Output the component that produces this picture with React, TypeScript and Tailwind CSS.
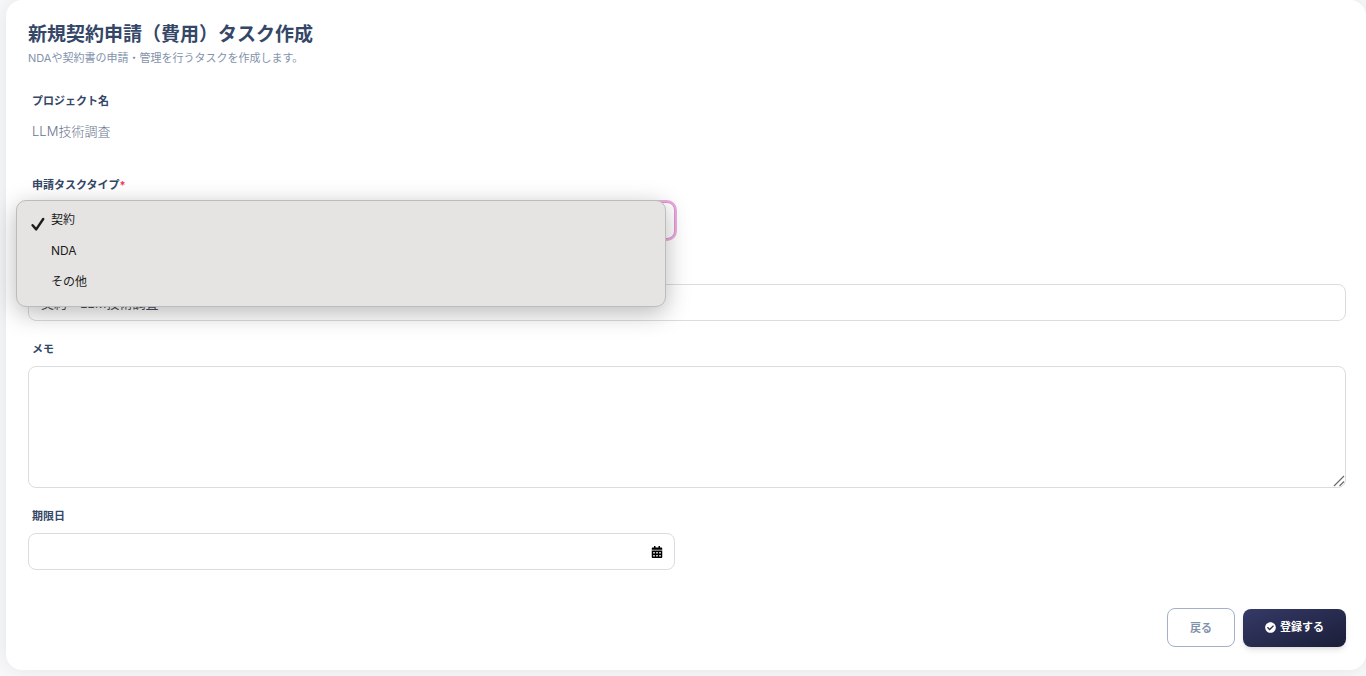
import { useState } from 'react';
import { FaCalendarAlt, FaCheckCircle } from 'react-icons/fa';

const taskTypes = ['契約', 'NDA', 'その他'];

const inputClass =
  'block w-full rounded-lg border border-[#d9dce1] bg-white px-3 text-[13px] text-[#495057] outline-none';

const Label = ({
  htmlFor,
  required,
  children,
}: {
  htmlFor: string;
  required?: boolean;
  children: React.ReactNode;
}) => (
  <label
    htmlFor={htmlFor}
    className="ml-1 mb-[7px] block text-[11px] leading-5 font-bold text-[#344767]"
  >
    {children}
    {required && <span className="text-[#f5365c]">*</span>}
  </label>
);

const CheckMark = () => (
  <svg
    viewBox="0 0 14 14"
    className="w-[14px] h-[14px] translate-y-1"
    fill="none"
    stroke="#1c1c1c"
    strokeWidth="2.4"
    strokeLinecap="round"
    strokeLinejoin="round"
  >
    <path d="M1.6 8.2 5.2 12.4 12.2 2" />
  </svg>
);

const ResizeHandle = () => (
  <svg
    viewBox="0 0 12 12"
    className="pointer-events-none absolute right-px bottom-px h-3 w-3"
    fill="none"
    stroke="#6b6b6b"
    strokeWidth="1.2"
  >
    <path d="M1 11 11 1M6.5 11 11 6.5" />
  </svg>
);

const App = () => {
  const [type, setType] = useState('契約');
  const [open, setOpen] = useState(true);
  const [title, setTitle] = useState('契約・LLM技術調査');
  const [memo, setMemo] = useState('');
  const [dueDate, setDueDate] = useState('');

  const selectType = (value: string) => {
    setType(value);
    setTitle(`${value}・LLM技術調査`);
    setOpen(false);
  };

  return (
    <div className="min-h-screen overflow-x-hidden bg-[#f8f9fa] pl-[6px] font-['Inter','Noto_Sans_CJK_JP',sans-serif]">
      <form
        onSubmit={(e) => e.preventDefault()}
        className="rounded-2xl bg-white pt-[23px] pr-5 pb-[23px] pl-[22px] shadow-[0_0_24px_rgba(0,0,0,0.09)]"
      >
        <h1 className="text-[19px] leading-6 font-bold text-[#344767]">
          新規契約申請（費用）タスク作成
        </h1>
        <p className="text-[11px] leading-[22px] text-[#8392ab]">
          NDAや契約書の申請・管理を行うタスクを作成します。
        </p>

        <div className="mt-[22px]">
          <Label htmlFor="project">プロジェクト名</Label>
          <output
            id="project"
            className="ml-1 block text-[13px] leading-[26px] font-light text-[#67748e]"
          >
            LLM技術調査
          </output>
        </div>

        <div className="mt-[31px] grid grid-cols-2 gap-6">
          <div className="relative">
            <Label htmlFor="task-type" required>
              申請タスクタイプ
            </Label>
            <select
              id="task-type"
              value={type}
              onChange={(e) => selectType(e.target.value)}
              className="block h-[37px] w-full appearance-none rounded-lg border border-[#e293d3] bg-white px-3 text-[13px] text-[#495057] outline-none ring-2 ring-[#e9aede]"
            >
              {taskTypes.map((item) => (
                <option key={item} value={item}>
                  {item}
                </option>
              ))}
            </select>

            {open && (
              <div
                role="listbox"
                className="absolute top-[25px] right-[9px] -left-3 z-10 rounded-[10px] border border-[#bcbcbb] bg-[#e5e4e2] pt-[3px] pb-[9px] shadow-[0_6px_24px_rgba(0,0,0,0.28)]"
              >
                {taskTypes.map((item) => (
                  <button
                    key={item}
                    type="button"
                    role="option"
                    aria-selected={item === type}
                    onClick={() => selectType(item)}
                    className="flex h-[31px] w-full items-center gap-1 pl-[14px] text-xs text-[#1c1c1c]"
                  >
                    <span className="w-4">{item === type && <CheckMark />}</span>
                    {item}
                  </button>
                ))}
              </div>
            )}
          </div>
        </div>

        <div className="mt-[18px]">
          <Label htmlFor="title" required>
            タスク名
          </Label>
          <input
            id="title"
            type="text"
            value={title}
            onChange={(e) => setTitle(e.target.value)}
            className={`${inputClass} h-[37px]`}
          />
        </div>

        <div className="mt-[18px]">
          <Label htmlFor="memo">メモ</Label>
          <div className="relative">
            <textarea
              id="memo"
              value={memo}
              onChange={(e) => setMemo(e.target.value)}
              className={`${inputClass} h-[122px] resize-y py-2 [&::-webkit-resizer]:hidden`}
            />
            <ResizeHandle />
          </div>
        </div>

        <div className="mt-[18px] grid grid-cols-2 gap-6">
          <div>
            <Label htmlFor="due-date">期限日</Label>
            <div className="relative">
              <input
                id="due-date"
                type="text"
                value={dueDate}
                onChange={(e) => setDueDate(e.target.value)}
                className={`${inputClass} h-[37px] pr-10`}
              />
              <FaCalendarAlt className="absolute inset-y-0 right-3 my-auto h-3 w-3 text-black" />
            </div>
          </div>
        </div>

        <div className="mt-[38px] flex items-center justify-end gap-2">
          <button
            type="button"
            className="h-[39px] rounded-lg border border-[#a3b0c9] px-[22px] pt-0.5 text-[11px] font-bold text-[#8392ab]"
          >
            戻る
          </button>
          <button
            type="submit"
            className="flex h-[38px] items-center gap-1 rounded-lg bg-linear-to-br from-[#353a68] to-[#1b1e38] px-[22px] text-[11px] font-bold text-white shadow-md"
          >
            <FaCheckCircle className="h-[11px] w-[11px]" />
            登録する
          </button>
        </div>
      </form>
    </div>
  );
};

export default App;
